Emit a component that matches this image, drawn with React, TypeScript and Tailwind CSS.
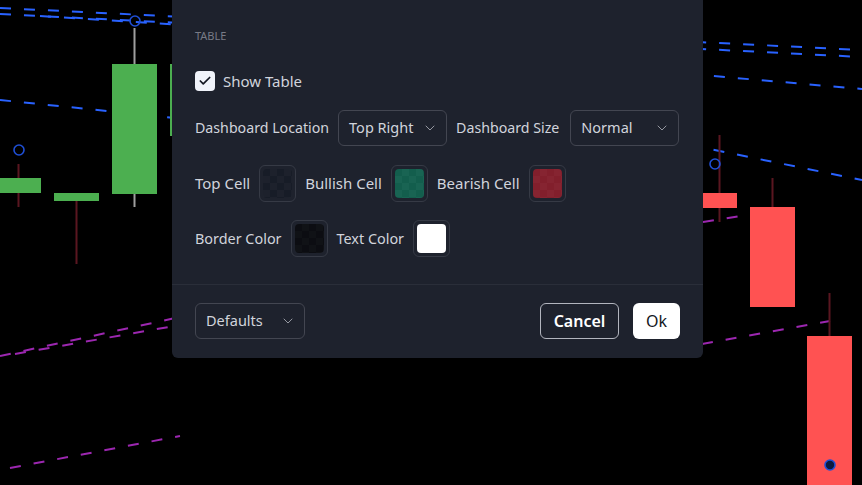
import React from 'react'
import { ChevronDown, Check } from 'lucide-react'

type Candle = {
  x: number
  w: number
  open: number
  close: number
  high: number
  low: number
  up: boolean
  wick?: string
}

const candles: Candle[] = [
  { x: -4, w: 45, open: 178, close: 193, high: 164, low: 207, up: true },
  { x: 54, w: 45, open: 193, close: 201, high: 193, low: 264, up: true },
  { x: 112, w: 45, open: 64, close: 194, high: 28, low: 207, up: true, wick: '#9e9e9e' },
  { x: 170, w: 45, open: 64, close: 136, high: 64, low: 136, up: true },
  { x: 702, w: 35, open: 193, close: 208, high: 135, low: 222, up: false },
  { x: 750, w: 45, open: 207, close: 307, high: 178, low: 307, up: false },
  { x: 807, w: 45, open: 336, close: 490, high: 293, low: 490, up: false },
]

const blueLines = [
  [0, 8, 862, 50],
  [0, 14, 862, 57],
  [40, 16, 200, 26],
  [0, 100, 175, 118],
  [690, 74, 862, 89],
  [690, 145, 862, 180],
]

const purpleLines = [
  [0, 356, 180, 317],
  [15, 354, 180, 325],
  [10, 468, 180, 436],
  [702, 344, 830, 321],
  [703, 222, 740, 216],
]

const markers = [
  { x: 19, y: 150 },
  { x: 135, y: 21 },
  { x: 715, y: 164 },
  { x: 830, y: 465, filled: true },
]

function Chart() {
  return (
    <svg className="absolute inset-0" width={862} height={485} viewBox="0 0 862 485">
      <rect width={862} height={485} fill="#000" />
      {blueLines.map(([x1, y1, x2, y2], i) => (
        <line key={'b' + i} x1={x1} y1={y1} x2={x2} y2={y2} stroke="#2962ff" strokeWidth={2} strokeDasharray="11 13" />
      ))}
      {purpleLines.map(([x1, y1, x2, y2], i) => (
        <line key={'p' + i} x1={x1} y1={y1} x2={x2} y2={y2} stroke="#9c27b0" strokeWidth={2} strokeDasharray="11 13" />
      ))}
      {candles.map((c, i) => {
        const cx = c.x + c.w / 2
        const top = Math.min(c.open, c.close)
        const bottom = Math.max(c.open, c.close)
        const wick = c.wick ?? '#5a1620'
        return (
          <g key={i}>
            <line x1={cx} y1={c.high} x2={cx} y2={top} stroke={wick} strokeWidth={2} />
            <line x1={cx} y1={bottom} x2={cx} y2={c.low} stroke={wick} strokeWidth={2} />
            <rect x={c.x} y={top} width={c.w} height={bottom - top} fill={c.up ? '#4caf50' : '#ff5252'} />
          </g>
        )
      })}
      {markers.map((m, i) => (
        <circle key={i} cx={m.x} cy={m.y} r={5} fill={m.filled ? '#0c1a40' : 'none'} stroke="#1f4fd6" strokeWidth={1.6} />
      ))}
    </svg>
  )
}

function Select({ value, width }: { value: string; width: string }) {
  return (
    <div className={`${width} shrink-0 h-9 flex items-center justify-between rounded-md border border-[#434651] pl-2.5 pr-2 text-[14.5px] text-[#d1d4dc]`}>
      <span>{value}</span>
      <ChevronDown size={16} strokeWidth={1.5} className="text-[#9598a1]" />
    </div>
  )
}

function Swatch({ color }: { color: string }) {
  return (
    <div className="w-[37px] h-[37px] shrink-0 flex items-center justify-center rounded-md border border-[#363a45]">
      <div className="w-[29px] h-[29px] rounded-[4px] overflow-hidden bg-[conic-gradient(#2a2e39_25%,#1e222d_0_50%,#2a2e39_0_75%,#1e222d_0)] bg-[length:14px_14px]">
        <div className="w-full h-full" style={{ backgroundColor: color }} />
      </div>
    </div>
  )
}

export default function App() {
  return (
    <div className="relative w-[862px] h-[485px] overflow-hidden bg-black font-['Noto_Sans',sans-serif]">
      <Chart />
      <div className="absolute left-[172px] top-0 w-[531px] bg-[#1e222d] rounded-b-md">
        <div className="px-[23px] pt-7 pb-[27px] flex flex-col text-[14.4px] text-[#d1d4dc] whitespace-nowrap">
          <div className="text-[11px] leading-4 text-[#787b86] uppercase">Table</div>
          <div className="mt-[27px] h-5 flex items-center gap-2">
            <div className="w-5 h-5 rounded-[4px] bg-[#f0f3fa] flex items-center justify-center">
              <Check size={14} strokeWidth={3} className="text-[#131722]" />
            </div>
            <span className="text-[15px]">Show Table</span>
          </div>
          <div className="mt-[19px] flex items-center gap-[9px]">
            <span className="text-[14.2px]">Dashboard Location</span>
            <Select value="Top Right" width="w-[109px]" />
            <span className="text-[14.2px]">Dashboard Size</span>
            <Select value="Normal" width="w-[109px] ml-0.5" />
          </div>
          <div className="mt-[19px] flex items-center gap-[9px] text-[15px]">
            <span>Top Cell</span>
            <Swatch color="rgba(19,23,34,0.55)" />
            <span>Bullish Cell</span>
            <Swatch color="rgba(8,153,110,0.5)" />
            <span>Bearish Cell</span>
            <Swatch color="rgba(185,30,45,0.65)" />
          </div>
          <div className="mt-[18px] flex items-center gap-[9px]">
            <span>Border Color</span>
            <Swatch color="rgba(0,0,0,0.6)" />
            <span>Text Color</span>
            <Swatch color="#ffffff" />
          </div>
        </div>
        <div className="border-t border-[#2a2e39] px-[23px] pt-[18px] pb-[19px] flex items-center justify-between">
          <Select value="Defaults" width="w-[110px]" />
          <div className="flex items-center gap-[14px]">
            <button className="h-9 w-[79px] rounded-md border border-[#b2b5be] text-[16px] font-semibold text-white">
              Cancel
            </button>
            <button className="h-9 w-[47px] rounded-md bg-white text-[16px] text-[#131722]">Ok</button>
          </div>
        </div>
      </div>
    </div>
  )
}
